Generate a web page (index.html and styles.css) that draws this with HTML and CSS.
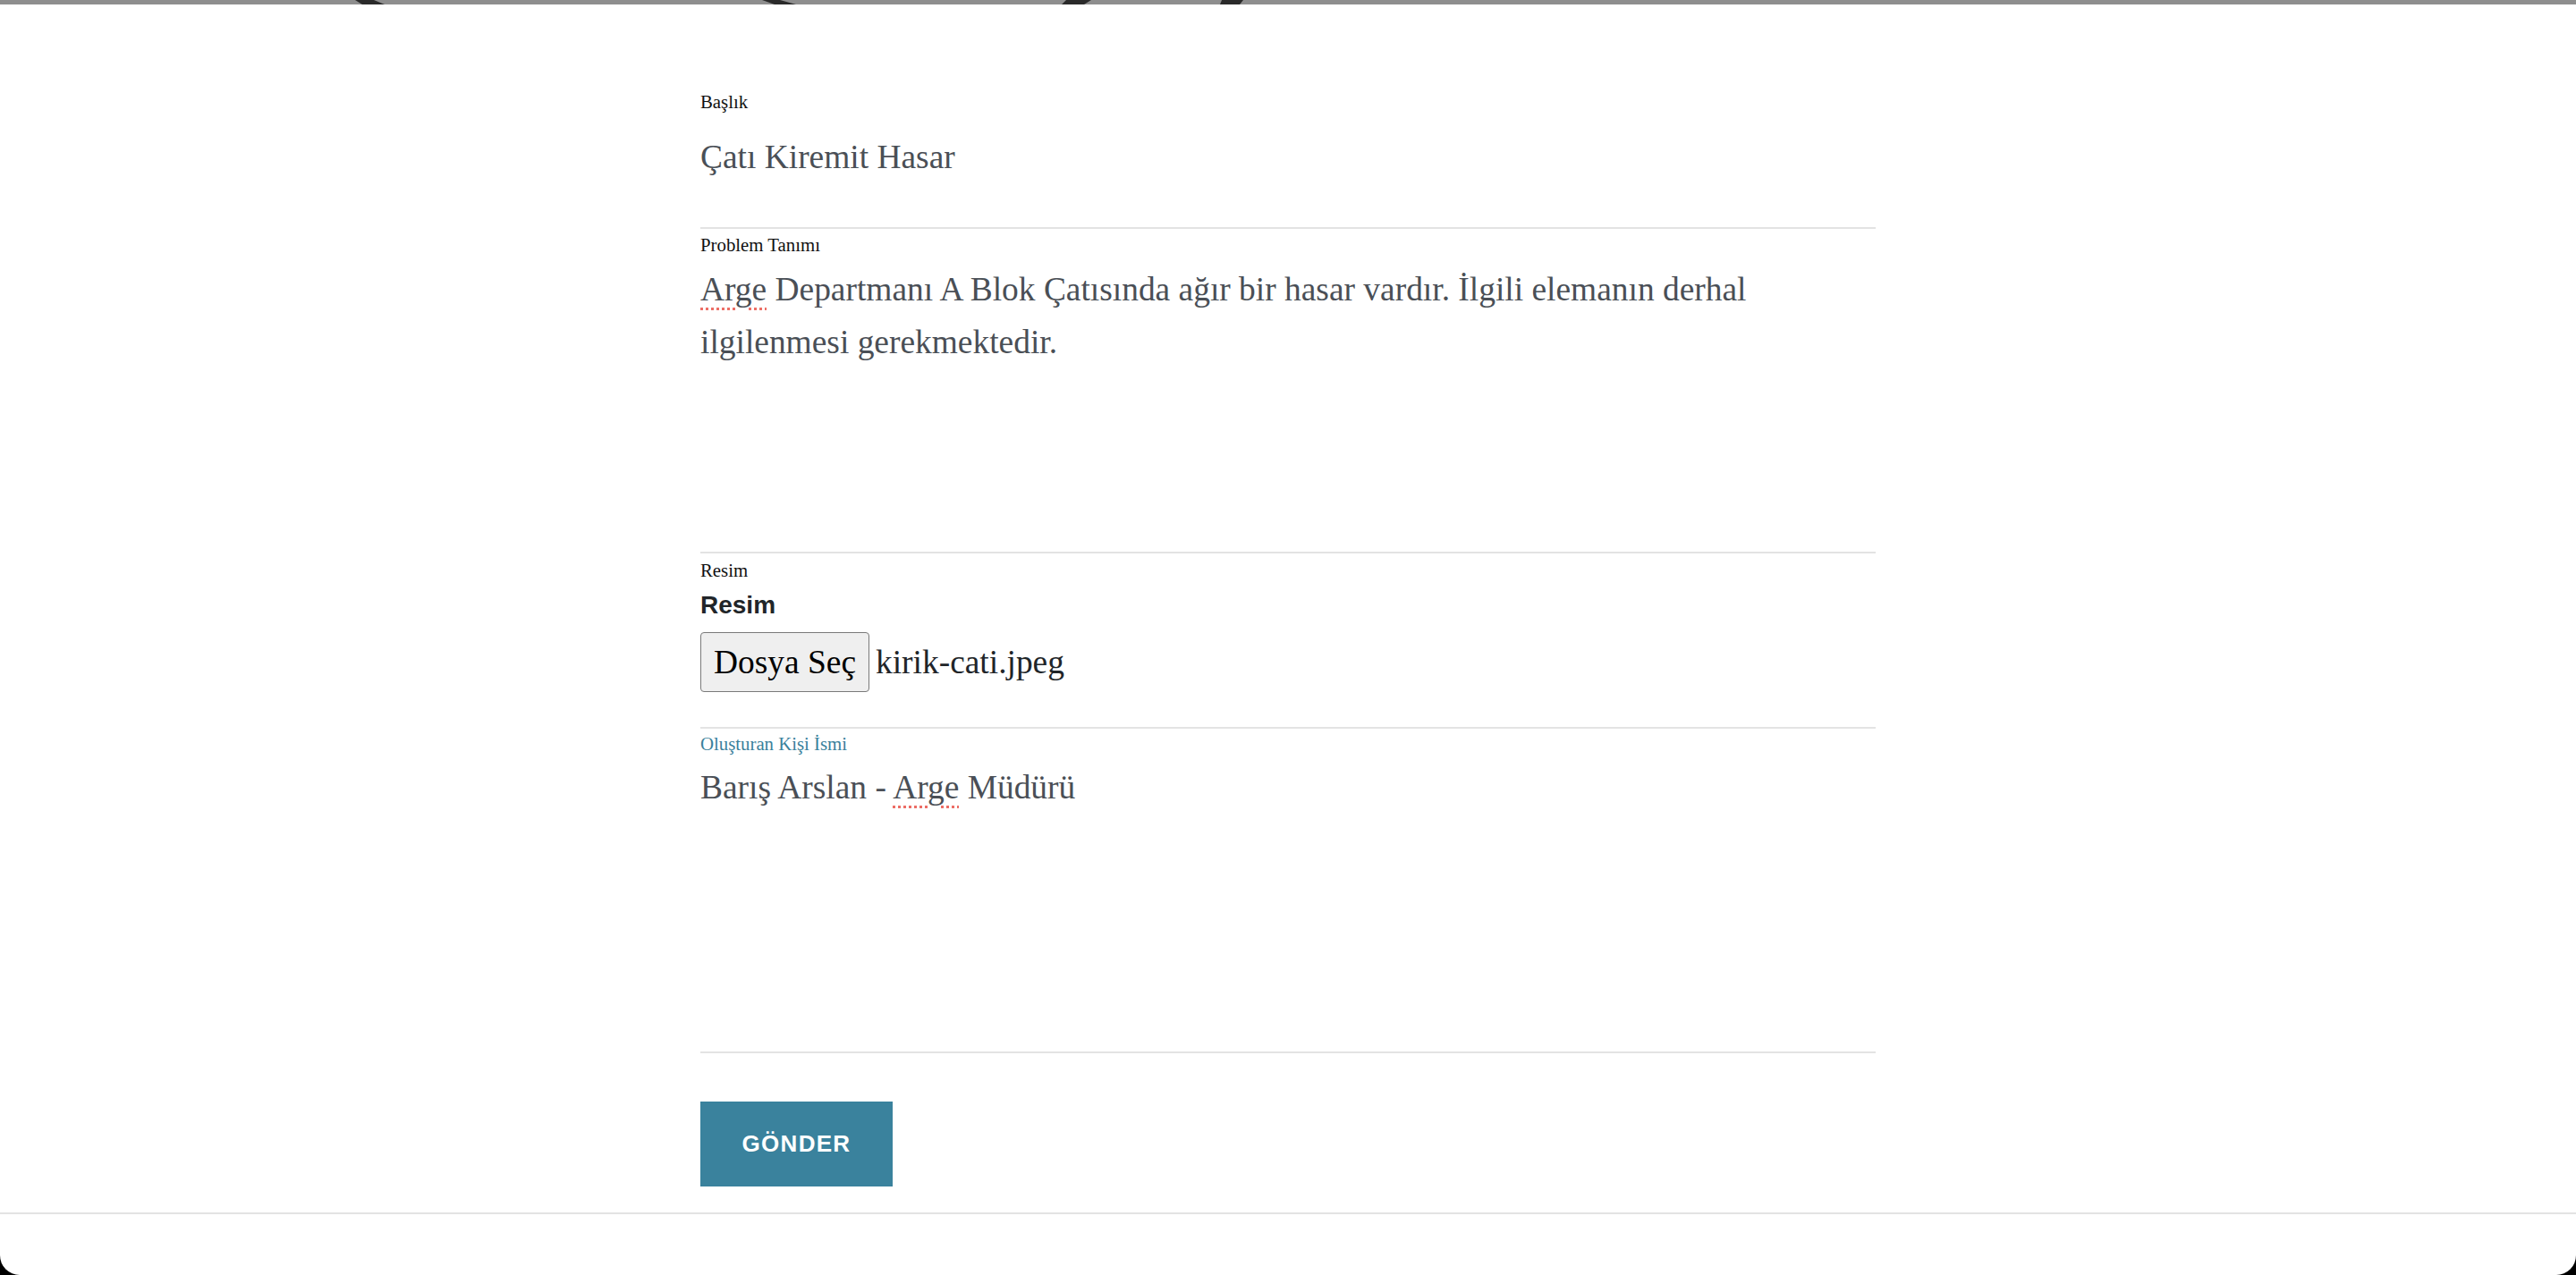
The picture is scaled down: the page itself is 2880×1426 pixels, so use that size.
FILE: index.html
```html
<!DOCTYPE html>
<html lang="tr">
<head>
<meta charset="utf-8">
<title>Form</title>
<link rel="stylesheet" href="styles.css">
</head>
<body>
<div class="window">
  <div class="top-strip">
    <svg class="strip-art" width="2880" height="5" viewBox="0 0 2880 5" preserveAspectRatio="none">
      <polygon points="397,0 418,0 430,5 405,5" fill="#2a2a2a"/>
      <polygon points="852,0 872,0 890,5 866,5" fill="#2a2a2a"/>
      <polygon points="1192,0 1220,0 1212,5 1187,5" fill="#2a2a2a"/>
      <polygon points="1366,0 1390,0 1386,5 1364,5" fill="#2a2a2a"/>
    </svg>
  </div>
  <form class="form">
    <div class="field field-title">
      <div class="label">Başlık</div>
      <div class="value">Çatı Kiremit Hasar</div>
    </div>
    <div class="field field-desc">
      <div class="label">Problem Tanımı</div>
      <div class="value textarea"><span class="spell">Arge</span> Departmanı A Blok Çatısında ağır bir hasar vardır. İlgili elemanın derhal ilgilenmesi gerekmektedir.</div>
    </div>
    <div class="field field-image">
      <div class="label">Resim</div>
      <div class="sub-label">Resim</div>
      <div class="file-row">
        <button type="button" class="file-btn">Dosya Seç</button>
        <span class="file-name">kirik-cati.jpeg</span>
      </div>
    </div>
    <div class="field field-author">
      <div class="label label-active">Oluşturan Kişi İsmi</div>
      <div class="value">Barış Arslan - <span class="spell">Arge</span> Müdürü</div>
    </div>
    <div class="actions">
      <button type="button" class="submit">GÖNDER</button>
    </div>
  </form>
  <div class="bottom-rule"></div>
</div>
</body>
</html>
```

FILE: styles.css
```css
html, body {
  margin: 0;
  padding: 0;
  background: #000;
}

.window {
  width: 2880px;
  height: 1426px;
  background: #fff;
  border-radius: 0 0 22px 22px;
  overflow: hidden;
  font-family: "Liberation Serif", "Times New Roman", serif;
}

.top-strip {
  height: 5px;
  background: #8e8e8e;
}

.strip-art {
  display: block;
}

.form {
  width: 1314px;
  margin: 0 auto;
  padding-top: 97px;
}

.field {
  display: flex;
  flex-direction: column;
  border-bottom: 2px solid #e3e3e3;
}

.label {
  font-size: 20.8px;
  line-height: 24px;
  color: #111;
}

.label-active {
  color: #3a819c;
}

.value {
  font-size: 37.44px;
  line-height: 43px;
  color: #4a4f56;
}

.field-title .value {
  margin-top: 28px;
}

.field-title {
  padding-bottom: 57px;
}

.field-desc {
  padding-top: 6px;
}

.textarea {
  margin-top: 8px;
  height: 323px;
  line-height: 59px;
  padding-right: 40px;
}

.spell {
  text-decoration: underline dotted #ec6e66;
  text-decoration-thickness: 3px;
  text-underline-offset: 8px;
}

.field-image {
  padding-top: 7px;
  padding-bottom: 39px;
}

.sub-label {
  margin-top: 11px;
  font-family: "Liberation Sans", Arial, sans-serif;
  font-weight: bold;
  font-size: 28px;
  line-height: 32px;
  color: #212529;
}

.file-row {
  margin-top: 14px;
  display: flex;
  align-items: center;
  gap: 7px;
}

.file-btn {
  height: 67px;
  width: 189px;
  padding: 0;
  border: 1.5px solid #7a7a7a;
  border-radius: 4px;
  background: #efefef;
  font-family: "Liberation Serif", "Times New Roman", serif;
  font-size: 37.44px;
  color: #000;
}

.file-name {
  font-size: 37.44px;
  color: #212529;
}

.field-author {
  padding-top: 5px;
  height: 363px;
  box-sizing: border-box;
}

.field-author .value {
  margin-top: 15px;
}

.actions {
  margin-top: 54px;
}

.submit {
  width: 215px;
  height: 95px;
  border: 0;
  border-radius: 0;
  background: #3a829d;
  color: #fff;
  font-family: "Liberation Sans", Arial, sans-serif;
  font-weight: bold;
  font-size: 26px;
  letter-spacing: 1.3px;
  padding: 0;
}

.bottom-rule {
  margin-top: 29px;
  height: 2px;
  background: #e3e3e3;
}
```
